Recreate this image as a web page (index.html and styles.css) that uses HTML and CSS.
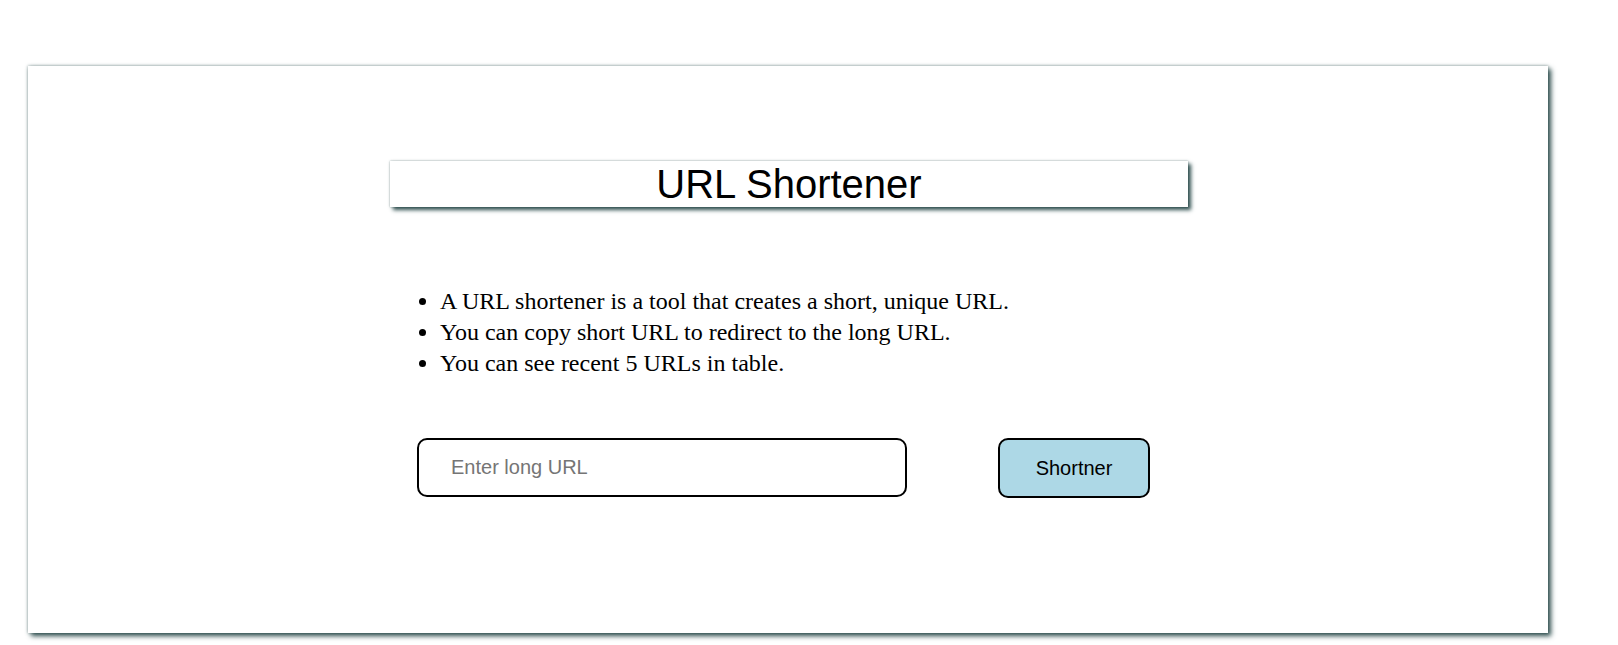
FILE: index.html
```html
<!DOCTYPE html>
<html lang="en">
<head>
<meta charset="utf-8">
<title>URL Shortener</title>
<link rel="stylesheet" href="styles.css">
</head>
<body>
<main class="card">
  <div class="inner">
    <h1 class="title">URL Shortener</h1>
    <ul class="info">
      <li>A URL shortener is a tool that creates a short, unique URL.</li>
      <li>You can copy short URL to redirect to the long URL.</li>
      <li>You can see recent 5 URLs in table.</li>
    </ul>
    <form class="form" onsubmit="return false">
      <input class="url-input" type="text" placeholder="Enter long URL">
      <button class="btn" type="submit">Shortner</button>
    </form>
  </div>
</main>
</body>
</html>
```

FILE: styles.css
```css
* { box-sizing: border-box; }

html, body {
  background: #fff;
}

body {
  margin: 0;
  padding: 66px 0 12px 28px;
  min-height: 645px;
  font-family: "Liberation Serif", "Times New Roman", serif;
}

.card {
  width: 1520px;
  height: 567px;
  background: #fff;
  box-shadow: 3px 3px 5px #2f4f4f, 0 0 3px rgba(47, 79, 79, 0.55);
  padding-top: 95px;
}

.inner {
  width: 798px;
  margin-left: 362px;
}

.title {
  margin: 0;
  height: 46px;
  font-family: "Liberation Sans", Arial, sans-serif;
  font-weight: normal;
  font-size: 40px;
  line-height: 46px;
  text-align: center;
  color: #000;
  background: #fff;
  box-shadow: 3px 3px 4px #2f4f4f, 0 0 2px rgba(47, 79, 79, 0.5);
}

.info {
  margin: 79px 0 0 10px;
  padding-left: 40px;
  font-size: 24px;
  line-height: 31px;
  color: #000;
}

.form {
  display: flex;
  align-items: flex-start;
  gap: 91px;
  margin: 59px 0 0 27px;
}

.url-input {
  width: 490px;
  height: 59px;
  border: 2px solid #000;
  border-radius: 10px;
  padding: 0 0 0 32px;
  font-family: "Liberation Sans", Arial, sans-serif;
  font-size: 20px;
  color: #000;
  outline: none;
}

.url-input::placeholder {
  color: #757575;
}

.btn {
  width: 152px;
  height: 60px;
  border: 2px solid #000;
  border-radius: 10px;
  background: #add8e6;
  font-family: "Liberation Sans", Arial, sans-serif;
  font-size: 20px;
  color: #000;
  padding: 0;
}
```
